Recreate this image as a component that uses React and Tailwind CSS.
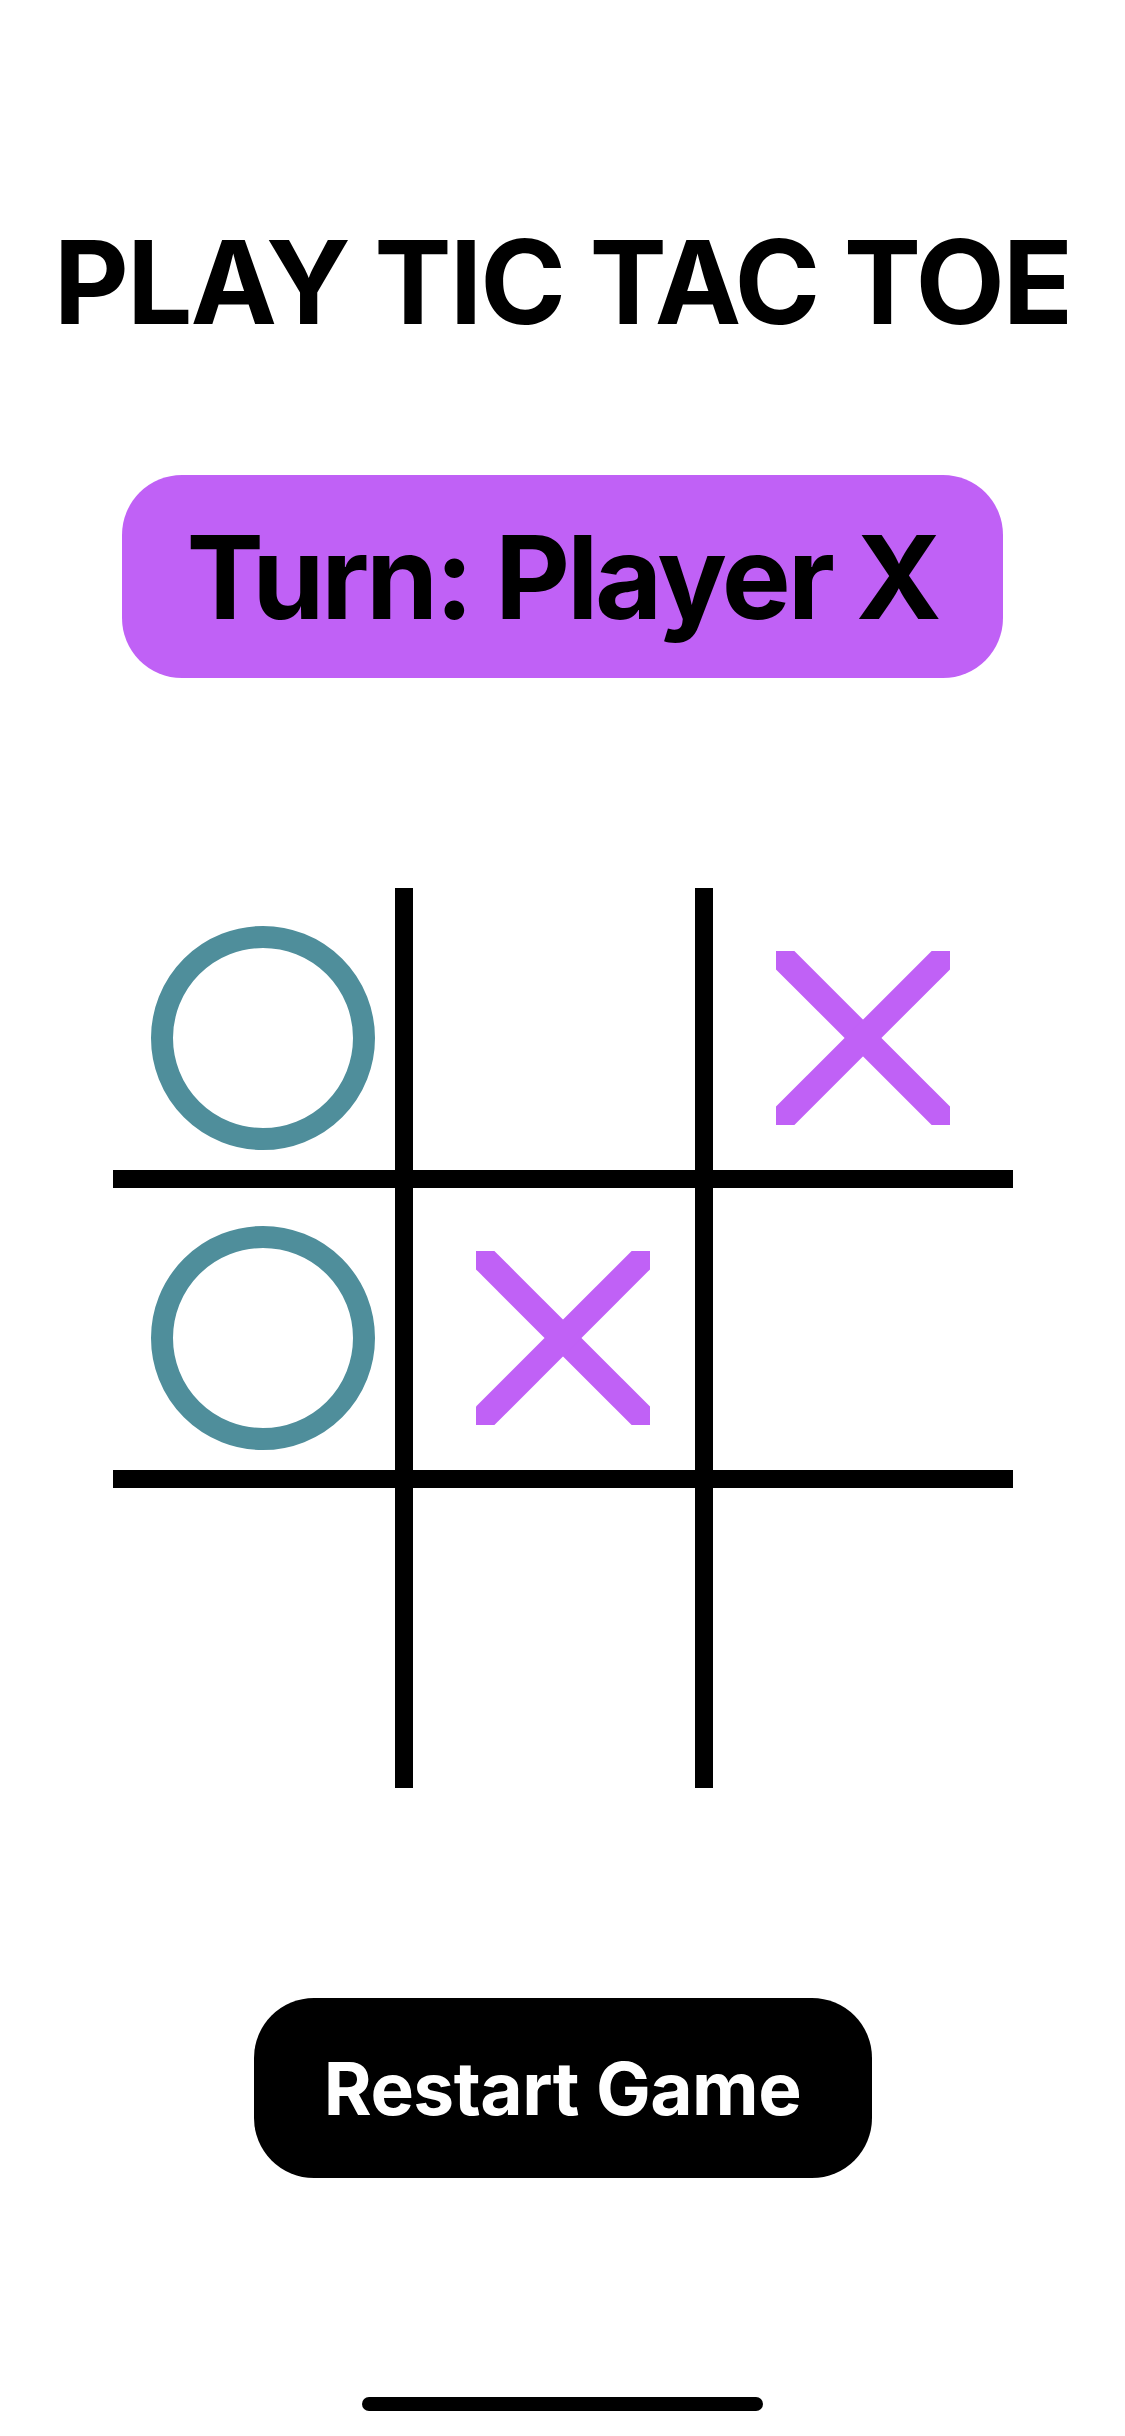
import React from 'react';

const board = ['O', '', 'X', 'O', 'X', '', '', '', ''];

// grid lines come from inset shadows so the marks stay centred in the full 300px cell
const cellLines = [
  'shadow-[inset_-18px_-18px_0_0_#000]',
  'shadow-[inset_-18px_-18px_0_0_#000]',
  'shadow-[inset_0_-18px_0_0_#000]',
  'shadow-[inset_-18px_-18px_0_0_#000]',
  'shadow-[inset_-18px_-18px_0_0_#000]',
  'shadow-[inset_0_-18px_0_0_#000]',
  'shadow-[inset_-18px_0_0_0_#000]',
  'shadow-[inset_-18px_0_0_0_#000]',
  '',
];

const MarkO = () => (
  <svg width="224" height="224" viewBox="0 0 224 224">
    <circle cx="112" cy="112" r="101" fill="none" stroke="#4F8E9B" strokeWidth="22" />
  </svg>
);

const MarkX = () => (
  <svg width="174" height="174" viewBox="0 0 174 174">
    <line x1="0" y1="0" x2="174" y2="174" stroke="#C061F6" strokeWidth="26" />
    <line x1="174" y1="0" x2="0" y2="174" stroke="#C061F6" strokeWidth="26" />
  </svg>
);

const App = () => {
  return (
    <div className="min-h-[2436px] w-[1125px] bg-white flex flex-col items-center font-['Inter',sans-serif]">
      <h1 className="mt-[224px] text-[116px] leading-none font-bold tracking-[-2px] text-black">
        PLAY TIC TAC TOE
      </h1>

      <div className="mt-[135px] w-[881px] h-[203px] rounded-[60px] bg-[#C061F6] flex items-center justify-center">
        <span className="text-[116px] leading-none font-bold tracking-[-3.2px] text-black">Turn: Player X</span>
      </div>

      <div className="mt-[210px] grid grid-cols-3 w-[900px] h-[900px]">
        {board.map((mark, i) => (
          <div key={i} className={`w-[300px] h-[300px] flex items-center justify-center ${cellLines[i]}`}>
            {mark === 'O' && <MarkO />}
            {mark === 'X' && <MarkX />}
          </div>
        ))}
      </div>

      <button className="mt-[210px] w-[618px] h-[180px] rounded-[60px] bg-black flex items-center justify-center">
        <span className="text-[73px] leading-none font-bold tracking-[-0.5px] text-white">Restart Game</span>
      </button>

      <div className="mt-[219px] w-[401px] h-[14px] rounded-full bg-black" />
    </div>
  );
};

export default App;
